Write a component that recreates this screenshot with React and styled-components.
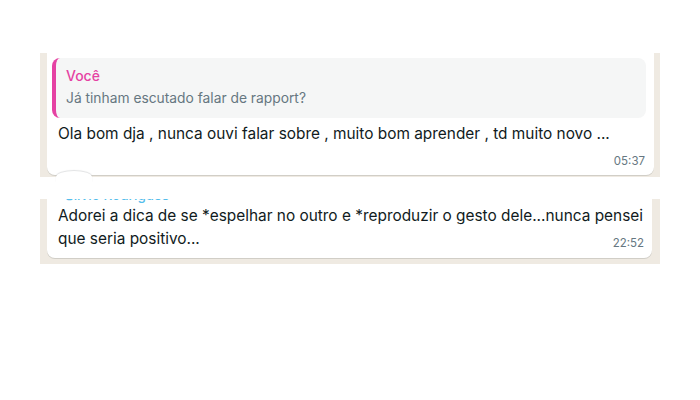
import React from "react";
import styled, { createGlobalStyle } from "styled-components";

const GlobalStyle = createGlobalStyle`
  body {
    margin: 0;
    background: #ffffff;
    font-family: "Inter", "Liberation Sans", sans-serif;
  }
`;

const Page = styled.div`
  width: 620px;
  padding: 53px 0 0 40px;
  display: flex;
  flex-direction: column;
  gap: 22px;
`;

// beige chat wallpaper strip behind each bubble
const Wallpaper = styled.div`
  background: #efeae2;
  padding: ${p => p.$pad};
  position: relative;
`;

const Bubble = styled.div`
  background: #ffffff;
  border-radius: 0 0 8px 8px;
  box-shadow: 0 1px 0.5px rgba(11, 20, 26, 0.13);
  padding: 5px ${p => p.$right}px ${p => p.$bottom}px 5px;
`;

const Quote = styled.div`
  background: #f5f6f6;
  border-radius: 8px;
  border-left: 4px solid #e542a3;
  height: 60px;
  box-sizing: border-box;
  padding: 9px 10px 0 10px;
  display: flex;
  flex-direction: column;
  gap: 4px;
`;

const QuoteAuthor = styled.div`
  color: #e542a3;
  font-size: 14px;
  font-weight: 500;
  line-height: 18px;
`;

const QuoteText = styled.div`
  color: #667781;
  font-size: 13.8px;
  line-height: 18px;
`;

const Text = styled.div`
  color: #111b21;
  font-size: 15.4px;
  line-height: 23px;
  padding-left: 6px;
  margin-top: ${p => p.$top}px;
  display: flow-root;
`;

const Time = styled.span`
  float: right;
  margin: 9px 5px 0 12px;
  font-size: 11.5px;
  line-height: 15px;
  color: #667781;
`;

const MetaRow = styled.div`
  display: flex;
  justify-content: flex-end;
  padding: 9px 1px 0 0;
  font-size: 11.5px;
  line-height: 15px;
  color: #667781;
`;

const NameClip = styled.div`
  height: 4px;
  overflow: hidden;
  margin-top: -5px;
  margin-bottom: 1px;
  padding-left: 13px;
`;

const Name = styled.div`
  color: #53bdeb;
  font-size: 13.5px;
  font-weight: 500;
  line-height: 18px;
  margin-top: -13px;
`;

// round bump peeking over the first bubble's bottom edge
const Bump = styled.div`
  position: absolute;
  left: 16px;
  bottom: -6px;
  width: 36px;
  height: 12px;
  border-radius: 50% 50% 0 0;
  background: #ffffff;
  box-shadow: 0 -1px 1px rgba(11, 20, 26, 0.12);
`;

export default function App() {
  return (
    <>
      <GlobalStyle />
      <Page>
        <Wallpaper $pad="0 6px 2px 7px">
          <Bubble $right={8} $bottom={6}>
            <Quote>
              <QuoteAuthor>Você</QuoteAuthor>
              <QuoteText>Já tinham escutado falar de rapport?</QuoteText>
            </Quote>
            <Text $top={4}>
              Ola bom dja , nunca ouvi falar sobre , muito bom aprender , td muito novo ...
            </Text>
            <MetaRow>05:37</MetaRow>
          </Bubble>
          <Bump />
        </Wallpaper>
        <Wallpaper $pad="0 8px 6px 7px">
          <Bubble $right={3} $bottom={7}>
            <NameClip>
              <Name>Silvio Rodrigues</Name>
            </NameClip>
            <Text $top={0}>
              Adorei a dica de se *espelhar no outro e *reproduzir o gesto dele...nunca pensei que seria positivo...
              <Time>22:52</Time>
            </Text>
          </Bubble>
        </Wallpaper>
      </Page>
    </>
  );
}
